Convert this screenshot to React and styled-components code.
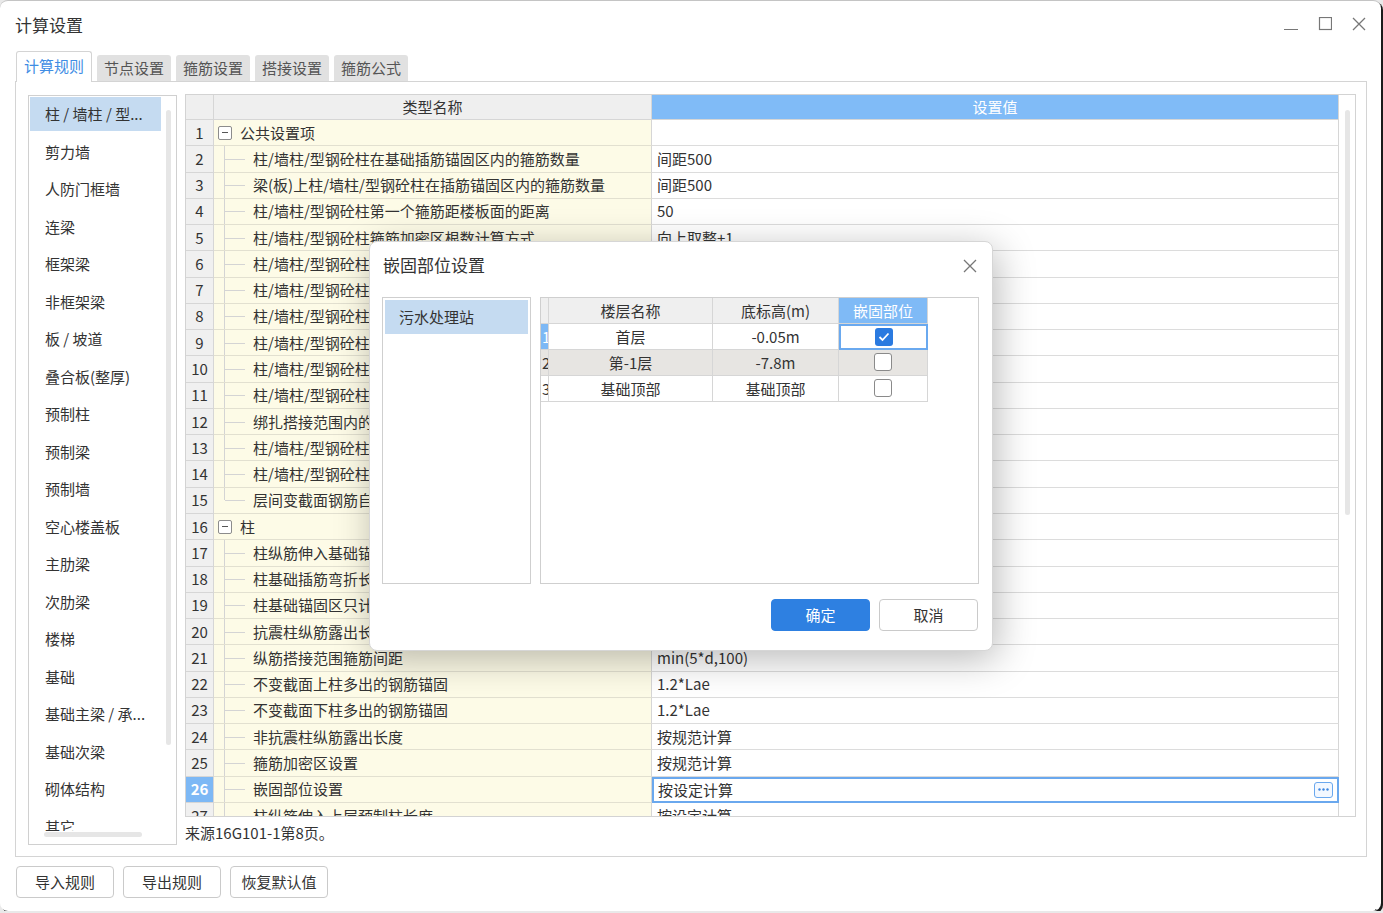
import React from "react";
import styled, { createGlobalStyle } from "styled-components";

const GlobalStyle = createGlobalStyle`
  html, body { margin: 0; padding: 0; background: #e9e9e9; }
  body { font-family: "Noto Sans CJK SC", "Microsoft YaHei", sans-serif; color: #333; }
  * { box-sizing: border-box; }
`;

const Window = styled.div`
  position: relative;
  width: 1381px;
  height: 911px;
  background: #fff;
  border-top: 1px solid #c4c4c4;
  border-radius: 8px;
  box-shadow: 2px 2px 0 #1b1b1b;
  display: flex;
  flex-direction: column;
  overflow: hidden;
`;

const TitleBar = styled.div`
  height: 51px;
  display: flex;
  justify-content: space-between;
  padding: 0 15px 0 15px;
  flex-shrink: 0;
`;

const Title = styled.div`
  font-size: 17px;
  line-height: 47px;
  color: #333;
`;

const WinControls = styled.div`
  display: flex;
  gap: 20px;
  padding-top: 16px;
  color: #777;
`;

const TabBar = styled.div`
  height: 29px;
  display: flex;
  align-items: flex-end;
  gap: 5px;
  padding-left: 16px;
  flex-shrink: 0;
`;

const Tab = styled.div`
  position: relative;
  z-index: 1;
  width: ${(p) => (p.active ? "76px" : "74px")};
  height: ${(p) => (p.active ? "31px" : "26px")};
  margin-bottom: ${(p) => (p.active ? "-1px" : "0")};
  background: ${(p) => (p.active ? "#fff" : "#e1e1e1")};
  border: ${(p) => (p.active ? "1px solid #d4d4d4" : "none")};
  border-bottom: none;
  border-radius: 3px 3px 0 0;
  color: ${(p) => (p.active ? "#3f8de4" : "#555")};
  font-size: 15px;
  display: flex;
  align-items: center;
  justify-content: center;
  padding-bottom: ${(p) => (p.active ? "4px" : "2px")};
`;

const Panel = styled.div`
  margin: 0 14px 0 15px;
  height: 776px;
  flex-shrink: 0;
  border: 1px solid #d4d4d4;
  padding: 12px 10px 0 12px;
  display: flex;
  gap: 8px;
`;

const SideList = styled.div`
  position: relative;
  flex-shrink: 0;
  width: 149px;
  height: 750px;
  margin-top: 1px;
  border: 1px solid #d0d0d0;
  padding: 1px;
`;

const SideItems = styled.div`
  width: 131px;
  height: 734px;
  overflow: hidden;
`;

const SideItem = styled.div`
  height: 34px;
  margin-bottom: 3.5px;
  padding-left: ${(p) => (p.small ? "14px" : "15px")};
  line-height: 33px;
  font-size: 15px;
  white-space: nowrap;
  background: ${(p) => (p.selected ? "#c5dbf1" : "transparent")};
  color: #333;
`;

const VThumb = styled.div`
  position: absolute;
  left: ${(p) => p.left}px;
  top: ${(p) => p.top}px;
  width: 5px;
  height: ${(p) => p.h}px;
  background: #e6e6e6;
  border-radius: 3px;
`;

const HThumb = styled.div`
  position: absolute;
  left: 15px;
  bottom: 7px;
  width: 98px;
  height: 5px;
  background: #e6e6e6;
  border-radius: 3px;
`;

const RightCol = styled.div`
  flex-shrink: 0;
  width: 1171px;
  display: flex;
  flex-direction: column;
`;

const Grid = styled.div`
  height: 723px;
  flex-shrink: 0;
  border: 1px solid #d3d3d3;
  display: flex;
  overflow: hidden;
`;

const Table = styled.div`
  width: 1153px;
  flex-shrink: 0;
  display: flex;
  flex-direction: column;
`;

const HeaderRow = styled.div`
  height: 25px;
  display: flex;
  flex-shrink: 0;
`;

const HeadCell = styled.div`
  width: ${(p) => p.w}px;
  height: 100%;
  background: ${(p) => (p.blue ? "#80bbf7" : "#efefef")};
  color: ${(p) => (p.blue ? "#fff" : "#333")};
  border-right: 1px solid #d6d6d6;
  border-bottom: 1px solid #d6d6d6;
  font-size: 15px;
  padding-bottom: 2px;
  display: flex;
  align-items: center;
  justify-content: center;
`;

const TBody = styled.div`
  flex: 1;
  overflow: hidden;
`;

const Row = styled.div`
  height: 26.28px;
  display: flex;
`;

const NumCell = styled.div`
  width: 28px;
  flex-shrink: 0;
  background: ${(p) => (p.active ? "#7db8f5" : "#f0f0f0")};
  color: ${(p) => (p.active ? "#fff" : "#333")};
  font-weight: ${(p) => (p.active ? 700 : 400)};
  border-right: 1px solid #d6d6d6;
  border-bottom: 1px solid #d6d6d6;
  font-size: 15px;
  padding-bottom: 1px;
  display: flex;
  align-items: center;
  justify-content: center;
`;

const NameCell = styled.div`
  width: 438px;
  flex-shrink: 0;
  background: #fdfbe7;
  border-right: 1px solid #d6d6d6;
  border-bottom: 1px solid #e2e0d0;
  font-size: 15px;
  display: flex;
  align-items: center;
  white-space: nowrap;
  overflow: hidden;
  span { padding-bottom: 1px; }
`;

const ValueCell = styled.div`
  width: 687px;
  flex-shrink: 0;
  background: #fff;
  border-bottom: ${(p) => (p.focused ? "2px solid #6aa8ee" : "1px solid #dcdcdc")};
  border-top: ${(p) => (p.focused ? "2px solid #6aa8ee" : "none")};
  border-left: ${(p) => (p.focused ? "2px solid #6aa8ee" : "none")};
  border-right: ${(p) => (p.focused ? "2px solid #6aa8ee" : "1px solid #d6d6d6")};
  padding-left: ${(p) => (p.focused ? "4px" : "5px")};
  padding-right: 4px;
  font-size: 15px;
  display: flex;
  align-items: center;
  justify-content: space-between;
  white-space: nowrap;
  span { padding-bottom: 1px; }
`;

const Toggle = styled.div`
  width: 14px;
  height: 14px;
  margin: 0 8px 0 4px;
  border: 1px solid #8c8c8c;
  border-radius: 2px;
  background: #fff;
  display: flex;
  align-items: center;
  justify-content: center;
  flex-shrink: 0;
  &::after {
    content: "";
    width: 6px;
    height: 1px;
    background: #555;
  }
`;

const Branch = styled.div`
  position: relative;
  width: 39px;
  height: 100%;
  flex-shrink: 0;
  &::before {
    content: "";
    position: absolute;
    left: 10px;
    top: 0;
    bottom: ${(p) => (p.last ? "50%" : "-1px")};
    border-left: 1px solid #d4d4d4;
  }
  &::after {
    content: "";
    position: absolute;
    left: 11px;
    width: 20px;
    top: 50%;
    border-top: 1px solid #d4d4d4;
  }
`;

const MoreButton = styled.div`
  width: 19px;
  height: 16px;
  border: 1px solid #6aa8ee;
  border-radius: 3px;
  background: #f3f8ff;
  display: flex;
  align-items: center;
  justify-content: center;
`;

const ScrollCol = styled.div`
  width: 16px;
  flex-shrink: 0;
  padding: 15px 0 0 6px;
`;

const Thumb = styled.div`
  width: 5px;
  height: 405px;
  background: #e6e6e6;
  border-radius: 3px;
`;

const Source = styled.div`
  font-size: 15px;
  line-height: 32px;
  height: 34px;
`;

const Footer = styled.div`
  display: flex;
  gap: 9px;
  padding: 9px 0 0 16px;
`;

const Button = styled.div`
  width: ${(p) => p.w || 98}px;
  height: 32px;
  border: 1px solid ${(p) => (p.primary ? "#2e80e1" : "#cacaca")};
  border-radius: 4px;
  background: ${(p) => (p.primary ? "#2e80e1" : "#fff")};
  color: ${(p) => (p.primary ? "#fff" : "#333")};
  font-size: 15px;
  padding-bottom: 2px;
  display: flex;
  align-items: center;
  justify-content: center;
`;

const Grip = styled.div`
  position: absolute;
  right: 4px;
  bottom: 3px;
  width: 10px;
  height: 10px;
`;

/* dialog */
const Dialog = styled.div`
  position: absolute;
  left: 369px;
  top: 240px;
  width: 624px;
  height: 410px;
  background: #fff;
  border: 1px solid #d6d6d6;
  border-radius: 8px;
  box-shadow: 4px 8px 38px rgba(0, 0, 0, 0.28);
  padding: 0 13px 0 12px;
  display: flex;
  flex-direction: column;
  z-index: 5;
`;

const DialogHeader = styled.div`
  height: 48px;
  display: flex;
  align-items: center;
  justify-content: space-between;
  padding-left: 1px;
`;

const DialogTitle = styled.div`
  font-size: 17px;
  color: #333;
  padding-bottom: 4px;
`;

const CloseBtn = styled.div`
  margin-right: 2px;
  display: flex;
  color: #777;
`;

const DialogBody = styled.div`
  margin-top: 7px;
  height: 287px;
  display: flex;
  gap: 9px;
`;

const DList = styled.div`
  width: 149px;
  border: 1px solid #cfcfcf;
  padding: 2px;
`;

const DGrid = styled.div`
  flex: 1;
  border: 1px solid #cfcfcf;
`;

const DRow = styled.div`
  height: 26px;
  width: fit-content;
  display: flex;
  background: ${(p) => p.bg || "#fff"};
`;

const DCell = styled.div`
  width: ${(p) => p.w}px;
  height: 100%;
  flex-shrink: 0;
  overflow: hidden;
  font-size: 15px;
  display: flex;
  align-items: center;
  justify-content: ${(p) => (p.left ? "flex-start" : "center")};
  padding-left: ${(p) => (p.left ? "1px" : "0")};
  padding-bottom: 1px;
  background: ${(p) => p.bg || "transparent"};
  color: ${(p) => p.color || "#333"};
  border-right: 1px solid #d6d6d6;
  border-bottom: 1px solid #d6d6d6;
  ${(p) => p.focused && "border: 2px solid #6aa9ef;"}
`;

const Checkbox = styled.div`
  width: 18px;
  height: 18px;
  border-radius: 3px;
  background: ${(p) => (p.checked ? "#2a7ae0" : "#fff")};
  border: ${(p) => (p.checked ? "none" : "1.5px solid #8a8a8a")};
  display: flex;
  align-items: center;
  justify-content: center;
`;

const DialogFooter = styled.div`
  margin-top: 15px;
  display: flex;
  justify-content: flex-end;
  gap: 9px;
  padding-right: 1px;
`;

const sideItems = [
  "柱 / 墙柱 / 型...", "剪力墙", "人防门框墙", "连梁", "框架梁", "非框架梁", "板 / 坡道",
  "叠合板(整厚)", "预制柱", "预制梁", "预制墙", "空心楼盖板", "主肋梁", "次肋梁", "楼梯",
  "基础", "基础主梁 / 承...", "基础次梁", "砌体结构", "其它",
];

const rows = [
  { name: "公共设置项", group: true, value: "" },
  { name: "柱/墙柱/型钢砼柱在基础插筋锚固区内的箍筋数量", value: "间距500" },
  { name: "梁(板)上柱/墙柱/型钢砼柱在插筋锚固区内的箍筋数量", value: "间距500" },
  { name: "柱/墙柱/型钢砼柱第一个箍筋距楼板面的距离", value: "50" },
  { name: "柱/墙柱/型钢砼柱箍筋加密区根数计算方式", value: "向上取整+1" },
  { name: "柱/墙柱/型钢砼柱箍筋非加密区根数计算方式", value: "向上取整-1" },
  { name: "柱/墙柱/型钢砼柱箍筋弯勾角度", value: "135°" },
  { name: "柱/墙柱/型钢砼柱纵筋搭接接头错开百分率", value: "50%" },
  { name: "柱/墙柱/型钢砼柱搭接范围内箍筋加密", value: "是" },
  { name: "柱/墙柱/型钢砼柱纵筋错开距离设置", value: "按规范计算" },
  { name: "柱/墙柱/型钢砼柱箍筋是否计算", value: "是" },
  { name: "绑扎搭接范围内的箍筋间距min(5d,100)中d的取值", value: "上下搭接筋" },
  { name: "柱/墙柱/型钢砼柱顶层纵筋锚固", value: "按规范计算" },
  { name: "柱/墙柱/型钢砼柱变截面纵筋处理", value: "按规范计算" },
  { name: "层间变截面钢筋自动判断", value: "是", last: true },
  { name: "柱", group: true, value: "" },
  { name: "柱纵筋伸入基础锚固形式", value: "全部伸入" },
  { name: "柱基础插筋弯折长度", value: "按规范计算" },
  { name: "柱基础锚固区只计算外侧箍筋", value: "否" },
  { name: "抗震柱纵筋露出长度", value: "按规范计算" },
  { name: "纵筋搭接范围箍筋间距", value: "min(5*d,100)" },
  { name: "不变截面上柱多出的钢筋锚固", value: "1.2*Lae" },
  { name: "不变截面下柱多出的钢筋锚固", value: "1.2*Lae" },
  { name: "非抗震柱纵筋露出长度", value: "按规范计算" },
  { name: "箍筋加密区设置", value: "按规范计算" },
  { name: "嵌固部位设置", value: "按设定计算", focused: true },
  { name: "柱纵筋伸入上层预制柱长度", value: "按设定计算" },
];

const floors = [
  { name: "首层", elev: "-0.05m", checked: true, bg: "#fff" },
  { name: "第-1层", elev: "-7.8m", checked: false, bg: "#e7e5e2" },
  { name: "基础顶部", elev: "基础顶部", checked: false, bg: "#fff" },
];

const CloseIcon = ({ size = 14 }) => (
  <svg width={size} height={size} viewBox="0 0 14 14">
    <path d="M1 1 L13 13 M13 1 L1 13" stroke="currentColor" strokeWidth="1.3" fill="none" />
  </svg>
);

const App = () => {
  return (
    <>
      <GlobalStyle />
      <Window>
        <TitleBar>
          <Title>计算设置</Title>
          <WinControls>
            <svg width="14" height="14" viewBox="0 0 14 14">
              <path d="M0 12.5 H14" stroke="currentColor" strokeWidth="1.2" />
            </svg>
            <svg width="14" height="14" viewBox="0 0 14 14">
              <rect x="1.5" y="0.5" width="12" height="12" stroke="currentColor" strokeWidth="1.2" fill="none" />
            </svg>
            <CloseIcon />
          </WinControls>
        </TitleBar>

        <TabBar>
          <Tab active>计算规则</Tab>
          <Tab>节点设置</Tab>
          <Tab>箍筋设置</Tab>
          <Tab>搭接设置</Tab>
          <Tab>箍筋公式</Tab>
        </TabBar>

        <Panel>
          <SideList>
            <SideItems>
              {sideItems.map((s, i) => (
                <SideItem key={s} selected={i === 0}>{s}</SideItem>
              ))}
            </SideItems>
            <VThumb left={137} top={14} h={635} />
            <HThumb />
          </SideList>

          <RightCol>
            <Grid>
              <Table>
                <HeaderRow>
                  <HeadCell w={28} />
                  <HeadCell w={438}>类型名称</HeadCell>
                  <HeadCell w={687} blue>设置值</HeadCell>
                </HeaderRow>
                <TBody>
                  {rows.map((r, i) => (
                    <Row key={i}>
                      <NumCell active={r.focused}>{i + 1}</NumCell>
                      <NameCell>
                        {r.group ? <Toggle /> : <Branch last={r.last} />}
                        <span>{r.name}</span>
                      </NameCell>
                      <ValueCell focused={r.focused}>
                        <span>{r.value}</span>
                        {r.focused && (
                          <MoreButton>
                            <svg width="11" height="3" viewBox="0 0 11 3">
                              <circle cx="1.5" cy="1.5" r="1.2" fill="#3d86e0" />
                              <circle cx="5.5" cy="1.5" r="1.2" fill="#3d86e0" />
                              <circle cx="9.5" cy="1.5" r="1.2" fill="#3d86e0" />
                            </svg>
                          </MoreButton>
                        )}
                      </ValueCell>
                    </Row>
                  ))}
                </TBody>
              </Table>
              <ScrollCol>
                <Thumb />
              </ScrollCol>
            </Grid>
            <Source>来源16G101-1第8页。</Source>
          </RightCol>
        </Panel>

        <Footer>
          <Button>导入规则</Button>
          <Button>导出规则</Button>
          <Button>恢复默认值</Button>
        </Footer>

        <Grip>
          <svg width="10" height="10" viewBox="0 0 10 10">
            {[[8, 2], [8, 5], [5, 5], [8, 8], [5, 8], [2, 8]].map(([x, y], k) => (
              <rect key={k} x={x} y={y} width="1.6" height="1.6" fill="#777" />
            ))}
          </svg>
        </Grip>

        <Dialog>
          <DialogHeader>
            <DialogTitle>嵌固部位设置</DialogTitle>
            <CloseBtn>
              <CloseIcon />
            </CloseBtn>
          </DialogHeader>
          <DialogBody>
            <DList>
              <SideItem selected small>污水处理站</SideItem>
            </DList>
            <DGrid>
              <DRow>
                <DCell w={8} bg="#efefef" />
                <DCell w={164} bg="#efefef">楼层名称</DCell>
                <DCell w={126} bg="#efefef">底标高(m)</DCell>
                <DCell w={89} bg="#7fbaf6" color="#fff">嵌固部位</DCell>
              </DRow>
              {floors.map((f, i) => (
                <DRow key={i} bg={f.bg}>
                  <DCell w={8} left bg={i === 0 ? "#7db8f5" : undefined} color={i === 0 ? "#fff" : "#333"}>
                    {i + 1}
                  </DCell>
                  <DCell w={164}>{f.name}</DCell>
                  <DCell w={126}>{f.elev}</DCell>
                  <DCell w={89} focused={i === 0}>
                    <Checkbox checked={f.checked}>
                      {f.checked && (
                        <svg width="12" height="10" viewBox="0 0 12 10">
                          <path d="M1.5 5 L4.5 8 L10.5 1.5" stroke="#fff" strokeWidth="1.8" fill="none" />
                        </svg>
                      )}
                    </Checkbox>
                  </DCell>
                </DRow>
              ))}
            </DGrid>
          </DialogBody>
          <DialogFooter>
            <Button primary w={99}>确定</Button>
            <Button w={99}>取消</Button>
          </DialogFooter>
        </Dialog>
      </Window>
    </>
  );
};

export default App;
